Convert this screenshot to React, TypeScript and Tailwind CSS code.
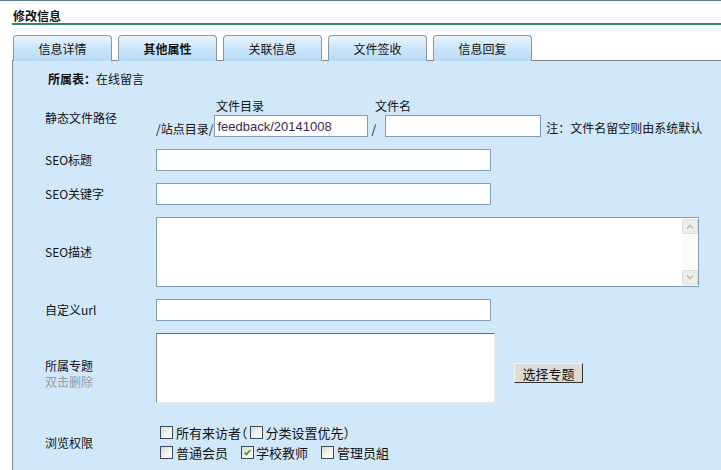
import type { ReactNode } from "react";

const TABS = ["信息详情", "其他属性", "关联信息", "文件签收", "信息回复"];
const ACTIVE_TAB = 1;

function Checkbox({ checked = false }: { checked?: boolean }) {
  return (
    <span className="inline-flex h-[13px] w-[13px] shrink-0 items-center justify-center border border-[#3b4a5c] bg-[linear-gradient(135deg,#dcdcd6_0%,#f4f4f0_60%,#ffffff_100%)]">
      {checked ? (
        <svg viewBox="0 0 11 11" className="h-[9px] w-[9px]">
          <path d="M2 5.5 L4.3 8 L9 2.5" fill="none" stroke="#21a121" strokeWidth="2" />
        </svg>
      ) : null}
    </span>
  );
}

function Row({ label, children, className = "" }: { label: ReactNode; children: ReactNode; className?: string }) {
  return (
    <div className={`flex items-center ${className}`}>
      <div className="w-[143px] shrink-0 pl-[32px]">{label}</div>
      <div className="flex items-center">{children}</div>
    </div>
  );
}

const inputCls = "h-[22px] border border-[#7f9db9] bg-white px-[2px] text-[13px] outline-none";

export default function App() {
  return (
    <div className="h-[470px] w-[721px] overflow-hidden border-t border-[#5d7b91] bg-white font-['Noto_Sans_CJK_SC','Liberation_Sans',sans-serif] text-[12px] leading-none text-[#111]">
      <div className="pl-[12px]">
        <div className="border-b-2 border-[#2f8a63] pb-[1px] pl-[1px] pt-[9px] text-[12px] font-bold leading-[12px]">修改信息</div>

        <div className="mt-[10px] flex gap-[6px] pl-[1px]">
          {TABS.map((tab, i) => (
            <div
              key={tab}
              className={`-mb-px flex h-[26px] w-[99px] items-center justify-center rounded-t-[4px] border border-b-0 border-[#8e969e] bg-[linear-gradient(180deg,#e8f4fd_0%,#cfe7fa_45%,#b4dbf6_100%)] text-[12px] ${i === ACTIVE_TAB ? "font-bold" : ""}`}
            >
              {tab}
            </div>
          ))}
        </div>

        <div className="h-[420px] border-l border-t border-[#878787] bg-[#d1e8fb]">
          <div className="pl-[35px] pt-[12px]">
            <span className="font-bold">所属表：</span>在线留言
          </div>

          <Row label={<div className="mt-[4px]">静态文件路径</div>} className="mt-[10px]">
            <div className="flex flex-col">
              <div className="flex h-[17px] items-end">
                <span className="ml-[60px] w-[159px]">文件目录</span>
                <span>文件名</span>
              </div>
              <div className="mt-[3px] flex items-end">
                <span className="pb-[2px]">/站点目录/</span>
                <input
                  className={`${inputCls} ml-[1px] h-[21px] w-[154px] font-['Liberation_Sans',sans-serif] text-[#3e2a4a]`}
                  defaultValue="feedback/20141008"
                />
                <span className="mx-[3px] pb-[2px]">/</span>
                <input className={`${inputCls} ml-[6px] h-[21px] w-[156px]`} />
                <span className="ml-[5px] pb-[3px]">注：文件名留空则由系统默认</span>
              </div>
            </div>
          </Row>

          <Row label="SEO标题" className="mt-[12px]">
            <input className={`${inputCls} w-[335px]`} />
          </Row>

          <Row label="SEO关键字" className="mt-[12px]">
            <input className={`${inputCls} w-[335px]`} />
          </Row>

          <Row label="SEO描述" className="mt-[12px]">
            <div className="flex h-[70px] w-[543px] border border-[#7f9db9] bg-white">
              <textarea className="h-full flex-1 resize-none outline-none" />
              <div className="flex w-[16px] flex-col justify-between bg-[#fbfbf8] py-[1px]">
                <div className="flex h-[15px] items-center justify-center rounded-[2px] border border-[#e0e0d8] bg-[#eeeee8] text-[#b8b8b0]">
                  <svg viewBox="0 0 8 5" className="h-[5px] w-[8px]">
                    <path d="M1 4.5 L4 1.5 L7 4.5" fill="none" stroke="currentColor" strokeWidth="1.3" />
                  </svg>
                </div>
                <div className="flex h-[15px] items-center justify-center rounded-[2px] border border-[#e0e0d8] bg-[#eeeee8] text-[#b8b8b0]">
                  <svg viewBox="0 0 8 5" className="h-[5px] w-[8px]">
                    <path d="M1 0.5 L4 3.5 L7 0.5" fill="none" stroke="currentColor" strokeWidth="1.3" />
                  </svg>
                </div>
              </div>
            </div>
          </Row>

          <Row label="自定义url" className="mt-[12px]">
            <input className={`${inputCls} w-[335px]`} />
          </Row>

          <Row
            label={
              <div className="mt-[12px] leading-[16px]">
                <div>所属专题</div>
                <div className="text-[#9a9a9a]">双击删除</div>
              </div>
            }
            className="mt-[12px]"
          >
            <div className="h-[70px] w-[339px] border border-[#f0ece0] border-l-[#8a8a8a] border-t-[#6a6a6a] bg-white" />
            <button className="ml-[19px] mt-[10px] h-[20px] w-[69px] border border-[#f4f4f4] border-b-[#333] border-r-[#333] bg-[#dedcd8] text-[13px] leading-none">
              选择专题
            </button>
          </Row>

          <Row label="浏览权限" className="mt-[23px]">
            <div className="flex flex-col gap-[7px] pl-[4px] text-[13px]">
              <div className="flex items-center">
                <Checkbox />
                <span className="ml-[3px] mr-[2px] [font-feature-settings:'halt']">所有来访者（</span>
                <Checkbox />
                <span className="ml-[3px]">分类设置优先）</span>
              </div>
              <div className="flex items-center">
                <Checkbox />
                <span className="ml-[3px] w-[65px]">普通会员</span>
                <Checkbox checked />
                <span className="ml-[2px] w-[65px]">学校教师</span>
                <Checkbox />
                <span className="ml-[3px]">管理员組</span>
              </div>
            </div>
          </Row>
        </div>
      </div>
    </div>
  );
}
